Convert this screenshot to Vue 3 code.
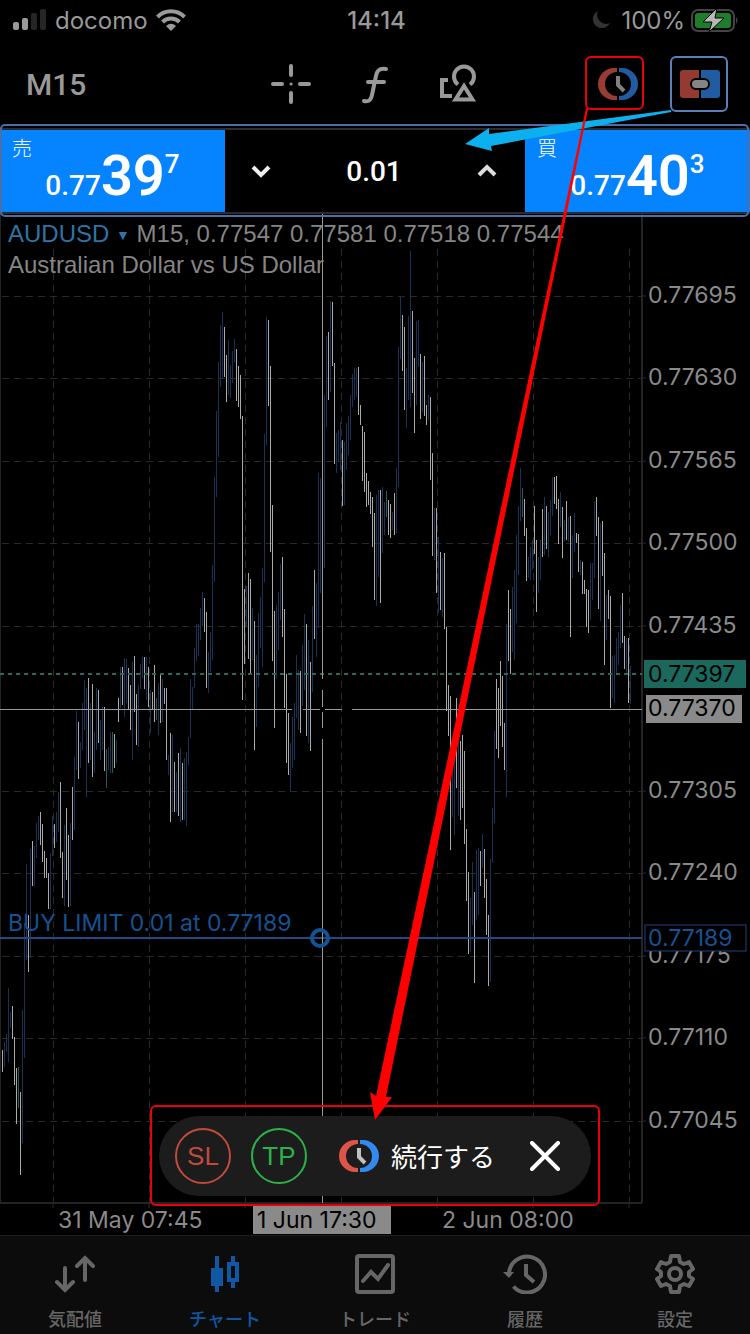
<script setup>
  import { ref } from 'vue'

  const lots = ref('0.01')

  // one bar every 2px: w = falling, b = rising, g = flat, then high-low
  const series = `
    w1050-1072 b1042-1067 b1034-1052 b988-1062 b1012-1028 w1006-1039 w1037-1085 w1068-1124 g1067-1108 w1092-1175
    b1010-1143 b923-1058 b864-960 w915-972 b849-958 w841-886 b846-886 b823-858 b816-840 w812-845
    w824-862 w851-878 w858-878 w873-909 b853-909 b816-856 w824-848 b812-842 b792-832 w782-858
    w852-898 b825-906 w808-880 w835-907 b823-906 w787-840 b757-830 b711-770 w722-779 b742-768
    b703-750 b680-730 b688-797 w678-763 b703-760 w684-777 b732-773 b688-750 w690-743 b720-760
    b707-750 w707-771 g749-788 b747-770 b732-773 g732-773 w734-768 b740-763 w698-722 b667-708
    w667-705 b658-717 b659-703 w668-709 w685-730 b662-760 w656-712 w694-745 b685-747 b664-689
    b657-678 w657-689 b657-700 w667-707 b690-733 w692-710 w665-722 g698-720 b683-735 w674-723
    b679-722 w688-704 w688-760 b755-775 w733-822 b735-812 w762-812 b772-812 w753-816 b748-822
    w763-820 b758-820 b752-826 b737-765 b679-738 b687-709 b648-688 b624-661 b624-656 b608-640
    b592-626 w598-632 w612-688 b652-693 b632-672 b565-660 b477-582 b411-497 b362-457 b325-387
    b312-379 w327-377 w355-402 b340-395 b365-398 b351-383 b339-363 w349-401 w366-407 w375-419
    w416-700 w589-664 b586-627 w573-659 w579-673 b608-660 w621-750 b655-727 b613-687 b597-648
    b568-667 b434-582 b317-445 w320-406 w366-552 w505-661 w611-728 b605-679 b592-650 b564-620
    w557-637 w609-708 w674-763 w713-775 b743-791 b717-768 b703-760 b655-718 b670-730 w671-733
    b645-706 b614-690 w624-736 b640-743 w662-751 b606-692 w570-639 b583-657 b473-628 b478-593
    b470-590 b395-568 b336-427 w332-400 b301-392 w302-366 w363-464 b433-473 b430-462 b422-470
    w440-506 b442-505 b423-470 b416-455 b395-440 b374-407 b368-400 b368-397 w367-415 w405-425
    w426-481 w432-492 w473-507 w481-505 w492-514 w497-547 w513-600 b495-606 b490-577 w490-603
    b487-553 b502-535 g491-517 w500-535 w504-538 b512-530 w493-535 b468-533 b347-487 b297-359
    w315-371 w327-410 b368-428 b316-400 b251-407 w311-393 w358-433 b321-405 b320-367 w354-419
    b362-412 w356-416 w405-425 b395-420 w397-480 w453-556 b508-560 w508-593 b537-613 w552-610
    b558-617 w553-629 w627-711 w685-736 w696-850 b740-817 b740-835 w698-788 b740-816 w741-820
    w735-808 w751-844 w829-901 w872-954 b898-952 b862-925 w892-983 b850-920 b848-915 w851-886
    b834-868 w849-898 w879-935 w915-986 b859-982 b808-863 b731-823 w679-749 w688-758 w661-726
    w676-747 w723-770 b624-797 w590-661 w609-674 b587-652 b570-660 b535-623 b506-575 b468-521
    g488-517 w499-536 w528-581 b557-578 b547-580 b540-570 w506-554 w540-612 b557-593 b540-580
    w509-557 b497-555 w506-549 b512-557 b500-535 b477-516 w477-504 w476-509 w499-544 b492-527
    w507-558 b520-541 w501-540 b517-542 w516-637 b535-578 b513-552 w533-543 w534-572 b560-575
    w562-594 w580-594 w589-627 w590-633 b563-620 b563-600 b501-578 w497-536 w517-609 b523-621
    w521-576 w553-665 b595-640 w590-619 w596-708 b656-698 b655-703 b638-675 b632-665 b605-648
    w593-643 w636-669 b638-673 w638-703 b666-704`

  const bars = series.trim().split(/\s+/).map((item, i) => {
    const [high, low] = item.slice(1).split('-').map(Number)
    return { kind: item[0], x: 2 + i * 2, high, height: low - high }
  })

  const prices = [
    { label: '0.77695', y: 296 },
    { label: '0.77630', y: 378 },
    { label: '0.77565', y: 461 },
    { label: '0.77500', y: 543 },
    { label: '0.77435', y: 626 },
    { label: '0.77305', y: 791 },
    { label: '0.77240', y: 873 },
    { label: '0.77175', y: 956 },
    { label: '0.77110', y: 1038 },
    { label: '0.77045', y: 1121 },
  ]
  const columns = [53, 149, 245, 341, 437, 533, 629]
</script>

<template>
  <main class="app">
    <div class="status">
      <div class="status-left">
        <svg width="34" height="22" viewBox="0 0 34 22">
          <g fill="#9a9a9a">
            <rect x="0" y="13" width="6" height="8" rx="2" />
            <rect x="9" y="9" width="6" height="12" rx="2" />
          </g>
          <g fill="#262626">
            <rect x="18" y="4" width="6" height="17" rx="2" />
            <rect x="27" y="0" width="6" height="21" rx="2" />
          </g>
        </svg>
        <span>docomo</span>
        <svg width="30" height="22" viewBox="0 0 30 22" fill="none" stroke="#9a9a9a" stroke-width="4">
          <path d="M1.500 8A19 19 0 0 1 28.500 8" />
          <path d="M6.500 13A12 12 0 0 1 23.500 13" />
          <path d="M10 17Q15 12.500 20 17L15 22Z" fill="#9a9a9a" stroke="none" />
        </svg>
      </div>
      <time class="clock">14:14</time>
      <div class="status-right">
        <svg class="moon" width="20" height="20" viewBox="0 0 20 20">
          <path d="M7 1A9 9 0 1 0 19 13A9 9 0 0 1 7 1Z" fill="#333" />
        </svg>
        <span>100%</span>
        <svg width="49" height="26" viewBox="0 0 49 26">
          <rect x="1" y="3" width="42" height="21" rx="6" fill="none" stroke="#444" stroke-width="2" />
          <rect x="4" y="6" width="36" height="15" rx="3" fill="#1c7d2b" />
          <path d="M45 10q3 3 0 7Z" fill="#444" />
          <path d="M26 1L12 15h9l-3 10L33 11h-9Z" fill="#b8b8b8" stroke="#000" stroke-width="1" />
        </svg>
      </div>
    </div>

    <header class="toolbar">
      <button class="timeframe">M15</button>
      <div class="tools">
        <button aria-label="Crosshair">
          <svg width="40" height="40" viewBox="0 0 40 40" stroke="#999" stroke-width="4" stroke-linecap="round">
            <path d="M20 2v9M20 29v9M2 20h9M29 20h9" />
            <path d="M20 20h.1" stroke-width="3" />
          </svg>
        </button>
        <button aria-label="Indicators">
          <svg width="40" height="40" viewBox="0 0 40 40" fill="none" stroke="#999" stroke-width="4" stroke-linecap="round">
            <path d="M9 37c5 1 7-1 8-6l4-19c1-6 4-8 10-7M13 18h16" />
          </svg>
        </button>
        <button aria-label="Objects">
          <svg width="40" height="40" viewBox="0 0 40 40" fill="none" stroke="#999" stroke-width="4">
            <path d="M9 16H3v16h10" />
            <path d="M19 20.500A10 10 0 1 1 31 20.500" />
            <path d="M25 22L16.500 35.500h17Z" />
          </svg>
        </button>
      </div>
      <div class="tools dim">
        <button aria-label="Pending order">
          <svg width="40" height="32" viewBox="0 0 40 32">
            <path d="M19 0h-3a16 16 0 0 0 0 32h3v-4A12 12 0 0 1 19 4Z" fill="#9b3c34" />
            <path d="M21 0h3a16 16 0 0 1 0 32h-3v-4A12 12 0 0 0 21 4Z" fill="#205c9f" />
            <path d="M20 8v9l6 6" fill="none" stroke="#808080" stroke-width="4" />
          </svg>
        </button>
        <button aria-label="One click trading">
          <svg width="40" height="28" viewBox="0 0 40 28">
            <path d="M19 0H3a3 3 0 0 0-3 3v22a3 3 0 0 0 3 3h16Z" fill="#943a30" />
            <path d="M21 0h16a3 3 0 0 1 3 3v22a3 3 0 0 1-3 3H21Z" fill="#205c9f" />
            <rect x="11" y="9" width="18" height="10" rx="5" fill="#858585" stroke="#000" stroke-width="2" />
          </svg>
        </button>
      </div>
    </header>

    <section class="trade">
      <button class="deal">
        <span class="side">売</span>
        <span class="quote"><span>0.77</span><b>39</b><i>7</i></span>
      </button>
      <div class="stepper">
        <button aria-label="Decrease volume">
          <svg width="20" height="14" viewBox="0 0 20 14" fill="none" stroke="#eee" stroke-width="4">
            <path d="M2 3l8 8 8-8" />
          </svg>
        </button>
        <input v-model="lots" aria-label="Volume" inputmode="decimal">
        <button aria-label="Increase volume">
          <svg width="20" height="14" viewBox="0 0 20 14" fill="none" stroke="#ddd" stroke-width="4">
            <path d="M2 11l8-8 8 8" />
          </svg>
        </button>
      </div>
      <button class="deal">
        <span class="side">買</span>
        <span class="quote"><span>0.77</span><b>40</b><i>3</i></span>
      </button>
    </section>

    <section class="chart">
      <svg class="plot" viewBox="0 214 750 1021">
        <g class="grid">
          <line v-for="p in prices" :key="p.label" x1="2" x2="642" :y1="p.y" :y2="p.y" />
          <line v-for="x in columns" :key="x" :x1="x" :x2="x" y1="249" y2="1203" />
        </g>
        <path class="axis" d="M642 214V1203M0 1203H642M0 214V1203" />
        <path class="ticks" d="M53 1203v5M149 1203v5M245 1203v5M341 1203v5M437 1203v5M533 1203v5M629 1203v5" />

        <rect
          v-for="bar in bars"
          :key="bar.x"
          :class="bar.kind"
          :x="bar.x"
          :y="bar.high"
          :height="bar.height"
          width="1"
        />

        <g class="scale">
          <g v-for="p in prices" :key="p.label">
            <path class="ticks" :d="`M642 ${p.y}h4`" />
            <text x="648" :y="p.y + 7">{{ p.label }}</text>
          </g>
          <text x="58" y="1228">31 May 07:45</text>
          <text x="442" y="1228">2 Jun 08:00</text>
        </g>

        <line class="bid" x1="0" x2="642" y1="674" y2="674" />
        <rect x="644" y="660" width="102" height="28" fill="#1b685d" />
        <text class="on-tag" x="648" y="682">0.77397</text>

        <path class="order-line" d="M0 938H642" />
        <text class="order-text" x="8" y="931">BUY LIMIT 0.01 at 0.77189</text>
        <rect x="645" y="925" width="101" height="26" fill="#000" stroke="#20417a" />
        <text class="order-text" x="648" y="946">0.77189</text>

        <path class="cross" d="M0 709.500H292M303 709.500H320M325 709.500H342M352 709.500H642" />
        <path class="cross" d="M322.500 214V679M322.500 690V707M322.500 712V728M322.500 739V1203" />
        <circle cx="320" cy="938" r="8" fill="none" stroke="#155293" stroke-width="4" />
        <rect x="646" y="695" width="96" height="28" fill="#8a8a8a" />
        <text class="on-tag" x="648" y="716">0.77370</text>
        <rect x="253" y="1206" width="138" height="28" fill="#8a8a8a" />
        <text class="on-tag" x="257" y="1228">1 Jun 17:30</text>
      </svg>

      <div class="caption">
        <p><a href="#" class="symbol">AUDUSD <small>▼</small></a> M15, 0.77547 0.77581 0.77518 0.77544</p>
        <p>Australian Dollar vs US Dollar</p>
      </div>

      <div class="order-bar">
        <button class="round sl">SL</button>
        <button class="round tp">TP</button>
        <button class="proceed">
          <svg width="40" height="32" viewBox="0 0 40 32">
            <path d="M19 0h-3a16 16 0 0 0 0 32h3v-4A12 12 0 0 1 19 4Z" fill="#dd5548" />
            <path d="M21 0h3a16 16 0 0 1 0 32h-3v-4A12 12 0 0 0 21 4Z" fill="#3389ee" />
            <path d="M20 8v9l6 6" fill="none" stroke="#c0c0c0" stroke-width="4" />
          </svg>
          <span>続行する</span>
        </button>
        <button class="close" aria-label="Close">
          <svg width="30" height="30" viewBox="0 0 30 30" stroke="#fff" stroke-width="4" stroke-linecap="round">
            <path d="M2 2l26 26M28 2L2 28" />
          </svg>
        </button>
      </div>
    </section>

    <nav class="tabs">
      <a href="#">
        <svg width="40" height="40" viewBox="0 0 40 40" fill="none" stroke="currentColor" stroke-width="4" stroke-linecap="round">
          <path d="M10 14v21M2 28l8 8 8-8M30 26V5M22 12l8-8 8 8" />
        </svg>
        気配値
      </a>
      <a href="#" class="active">
        <svg width="40" height="40" viewBox="0 0 40 40" fill="currentColor">
          <path d="M10 2h4v12h4v18h-4v6h-4v-6H6V14h4Z" />
          <path fill-rule="evenodd" d="M26 2h4v6h4v20h-4v6h-4v-6h-4V8h4ZM26 12v12h4V12Z" />
        </svg>
        チャート
      </a>
      <a href="#">
        <svg width="40" height="40" viewBox="0 0 40 40" fill="none" stroke="currentColor" stroke-width="4">
          <rect x="2" y="2" width="36" height="36" rx="2" />
          <path d="M8 27l8-9 7 7L33 11" stroke-linecap="round" />
        </svg>
        トレード
      </a>
      <a href="#">
        <svg width="44" height="40" viewBox="0 0 44 40" fill="none" stroke="currentColor" stroke-width="4">
          <path d="M6 20A18 18 0 1 1 10.500 32.500" />
          <path d="M0 18h11l-5 6Z" fill="currentColor" stroke="none" />
          <path d="M23 10v11l8 7" />
        </svg>
        履歴
      </a>
      <a href="#">
        <svg width="40" height="40" viewBox="0 0 40 40" fill="none" stroke="currentColor" stroke-width="4" stroke-linejoin="round">
          <path d="M16 2h8l1 6 4 2 5-2 4 7-4 3v4l4 3-4 7-5-2-4 2-1 6h-8l-1-6-4-2-5 2-4-7 4-3v-4l-4-3 4-7 5 2 4-2Z" />
          <circle cx="20" cy="20" r="6" />
        </svg>
        設定
      </a>
    </nav>

    <svg class="marks" viewBox="0 0 750 1334" fill="none">
      <rect x="1" y="125" width="747" height="91" rx="4" stroke="#4a6fa8" stroke-width="2" />
      <rect x="671" y="57" width="56" height="54" rx="5" stroke="#5b80b8" stroke-width="2" />
      <rect x="586" y="57" width="57" height="52" rx="5" stroke="#e8000b" stroke-width="2" />
      <rect x="151" y="1106" width="448" height="99" rx="5" stroke="#e8000b" stroke-width="2" />
      <path d="M671 110L489 134L489 128L465 144L492 151L491 146L671 112Z" fill="#0cb0ee" />
      <path d="M586 108L376 1096L370 1092L375 1120L392 1097L386 1097L588 109Z" fill="#f00" />
    </svg>
  </main>
</template>

<style>
  body {
    margin: 0;
    background: #000;
  }
</style>

<style scoped>
  .app {
    position: relative;
    background: #000;
    color: #999;
    font-family: Inter, "Noto Sans CJK JP", sans-serif;
  }
  button,
  input {
    margin: 0;
    padding: 0;
    border: 0;
    background: none;
    color: inherit;
    font: inherit;
  }
  svg {
    display: block;
  }
  a {
    color: inherit;
    text-decoration: none;
  }

  .status {
    display: grid;
    grid-template-columns: 1fr auto 1fr;
    align-items: center;
    height: 40px;
    padding: 0 10px 0 13px;
    font-size: 24px;
  }
  .status-left,
  .status-right {
    display: flex;
    align-items: center;
    gap: 8px;
  }
  .status-right {
    justify-content: flex-end;
    gap: 6px;
  }
  .moon {
    margin-right: 4px;
  }
  .clock {
    font-weight: 500;
  }

  .toolbar {
    display: flex;
    align-items: center;
    height: 88px;
    padding: 0 30px 0 26px;
  }
  .timeframe {
    font: 500 30px Roboto, sans-serif;
  }
  .tools {
    display: flex;
    align-items: center;
    gap: 44px;
    margin-left: auto;
  }
  .tools.dim {
    gap: 42px;
    margin-left: 119px;
  }

  .trade {
    display: grid;
    grid-template-columns: 3fr 4fr 3fr;
    grid-template-rows: 82px;
    border-top: 2px solid #2c2c2e;
    border-bottom: 2px solid #2c2c2e;
  }
  .deal {
    position: relative;
    background: #0684ff;
    color: #fff;
  }
  .side {
    position: absolute;
    top: 4px;
    left: 12px;
    font: 300 20px/28px "Noto Sans CJK JP", sans-serif;
  }
  .quote {
    display: flex;
    justify-content: center;
    align-items: baseline;
    padding-top: 16px;
    font: 500 28px/60px Roboto, sans-serif;
  }
  .quote b {
    font-size: 56px;
    font-weight: 600;
  }
  .quote i {
    align-self: flex-start;
    font-size: 26px;
    font-style: normal;
    line-height: 36px;
  }
  .stepper {
    display: flex;
    justify-content: space-between;
    align-items: center;
    padding: 0 28px 0 26px;
    color: #fff;
  }
  .stepper input {
    width: 120px;
    text-align: center;
    font: 500 28px Roboto, sans-serif;
  }

  .chart {
    position: relative;
  }
  .plot {
    width: 100%;
    height: auto;
    font-size: 23px;
  }
  .grid line {
    stroke: #292929;
    stroke-width: 1;
    stroke-dasharray: 7 5;
    shape-rendering: crispEdges;
  }
  .axis {
    fill: none;
    stroke: #242424;
    stroke-width: 2;
  }
  .ticks {
    stroke: #2b2b2b;
  }
  .w {
    fill: #aaa;
  }
  .b {
    fill: #173457;
  }
  .g {
    fill: #2b5a57;
  }
  .scale {
    fill: #8a8a8a;
  }
  .on-tag {
    fill: #000;
  }
  .bid {
    stroke: #2e6858;
    stroke-width: 2;
    stroke-dasharray: 4 4;
  }
  .order-line {
    stroke: #1f4a86;
    stroke-width: 2;
  }
  .order-text {
    fill: #155293;
  }
  .cross {
    stroke: #999;
    stroke-width: 1;
  }

  .caption {
    position: absolute;
    top: 5px;
    left: 8px;
    font: 24px/30px "Liberation Sans", sans-serif;
    color: #858585;
  }
  .caption p {
    margin: 0;
  }
  .symbol {
    color: #2f74a6;
  }
  .symbol small {
    font-size: 14px;
    vertical-align: 2px;
  }

  .order-bar {
    position: absolute;
    bottom: 39px;
    left: 50%;
    transform: translateX(-50%);
    display: flex;
    align-items: center;
    height: 80px;
    padding: 0 31px 0 16px;
    border-radius: 40px;
    background: #1c1c1c;
    white-space: nowrap;
  }
  .round {
    width: 56px;
    height: 56px;
    border: 2px solid;
    border-radius: 50%;
    font: 26px "Liberation Sans", sans-serif;
  }
  .sl {
    margin-right: 20px;
    color: #c04a3e;
  }
  .tp {
    color: #2bb14a;
  }
  .proceed {
    display: flex;
    align-items: center;
    gap: 12px;
    margin: 0 35px 0 32px;
    color: #fff;
    font: 26px/36px "Noto Sans CJK JP", sans-serif;
  }

  .tabs {
    display: grid;
    grid-template-columns: repeat(5, 1fr);
    height: 98px;
    border-top: 1px solid #1c1c1c;
    background: #0c0c0c;
  }
  .tabs a {
    display: flex;
    flex-direction: column;
    align-items: center;
    gap: 10px;
    padding-top: 18px;
    color: #666;
    font: 500 18px/28px "Noto Sans CJK JP", sans-serif;
  }
  .tabs .active {
    color: #1057a4;
  }

  .marks {
    position: absolute;
    top: 0;
    left: 0;
    width: 100%;
    height: auto;
    pointer-events: none;
  }
</style>
